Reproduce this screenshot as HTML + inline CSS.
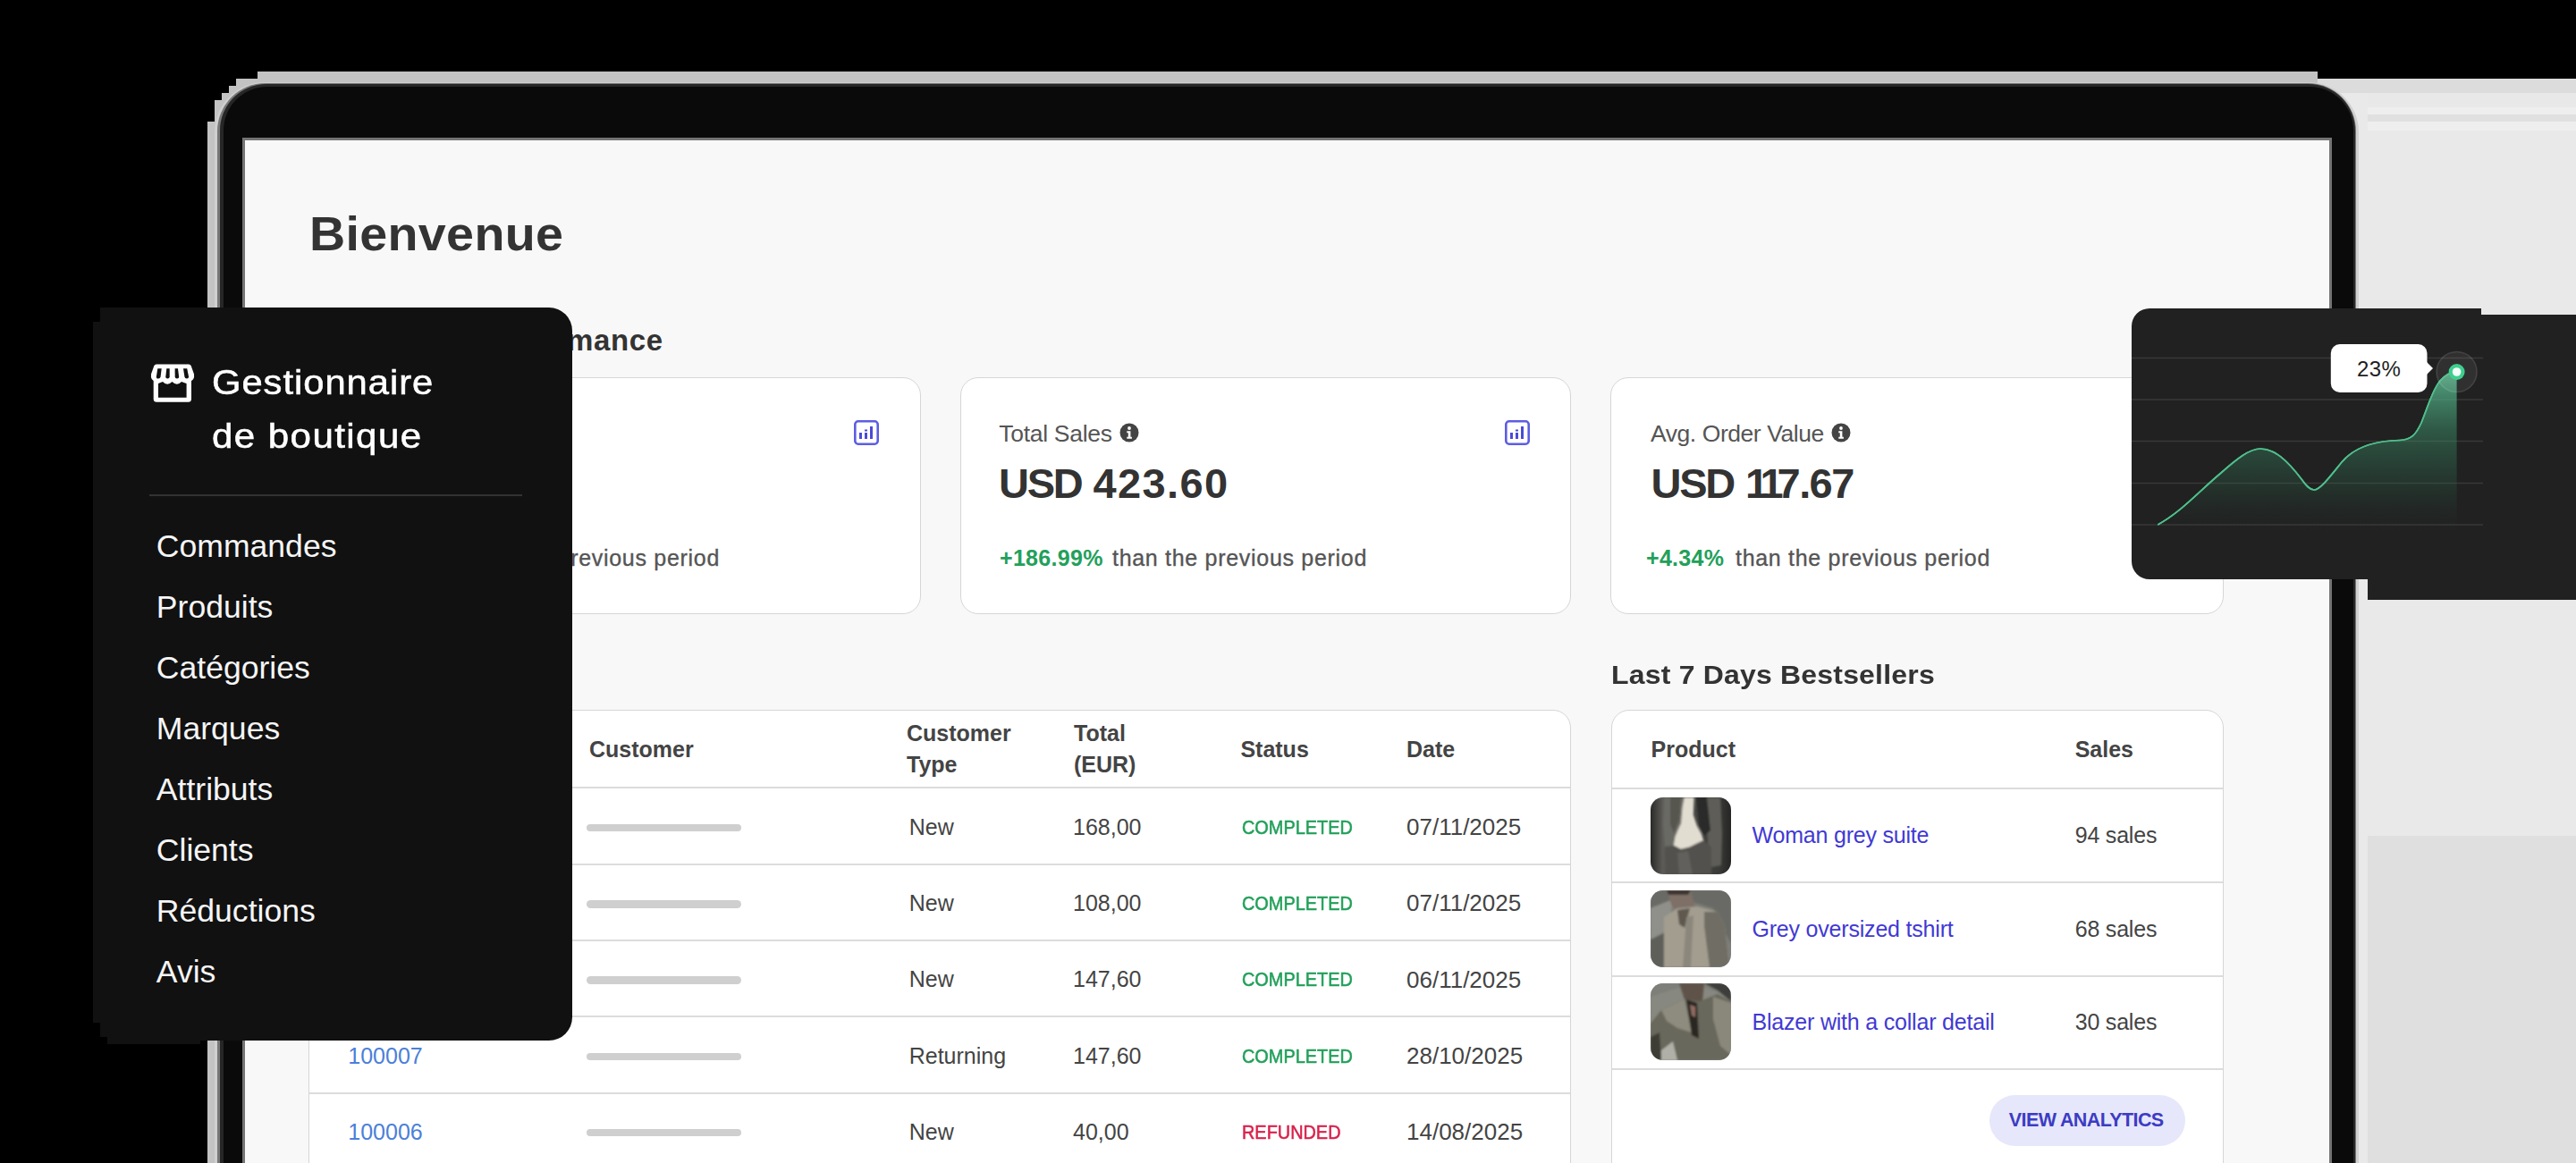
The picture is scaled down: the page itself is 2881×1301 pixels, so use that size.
<!DOCTYPE html>
<html><head><meta charset="utf-8">
<style>
*{margin:0;padding:0;box-sizing:border-box}
html,body{width:2881px;height:1301px;overflow:hidden;background:#000}
body{position:relative;font-family:"Liberation Sans",sans-serif}
.a{position:absolute}
.t{position:absolute;line-height:1;white-space:nowrap}
.b{font-weight:bold}
.card{background:#fff;border:1.5px solid #d6d6d6;border-radius:20px}
.thumb{border-radius:14px;overflow:hidden}
</style></head><body>
<svg width="0" height="0" style="position:absolute"><defs><filter id="bl" x="-10%" y="-10%" width="120%" height="120%"><feGaussianBlur stdDeviation="1.2"/></filter></defs></svg>

<!-- device outer grey frame (stepped) -->
<svg class="a" style="left:0;top:0" width="2881" height="1301">
  <polygon fill="#c3c3c3" points="288,80 2592,80 2592,1301 232,1301 232,136 240,136 240,112 248,112 248,104 256,104 256,96 264,96 264,88 288,88"/>
  <rect x="2592" y="88" width="289" height="1213" fill="#e9e9e9"/>
  <rect x="2592" y="88" width="289" height="16" fill="#dcdcdc"/>
  <rect x="2648" y="104" width="233" height="16" fill="#e8e8e8"/>
  <rect x="2648" y="120" width="233" height="8" fill="#eeeeee"/>
  <rect x="2648" y="128" width="233" height="8" fill="#e0e0e0"/>
  <rect x="2648" y="136" width="233" height="10" fill="#eeeeee"/>
  <rect x="2648" y="935" width="233" height="366" fill="#dfdfdf"/>
  <rect x="240" y="92" width="2398" height="1300" rx="56" fill="#d0d0d0"/>
  <rect x="243" y="93" width="2392" height="1300" rx="54" fill="#777"/>
  <rect x="246" y="94" width="2388" height="1300" rx="52" fill="#262626"/>
  <rect x="250" y="97" width="2382" height="1300" rx="49" fill="#0a0a0a"/>
  <rect x="271" y="154" width="2337" height="1200" fill="#747474"/>
</svg>

<!-- screen -->
<div class="a" id="screen" style="left:274px;top:157px;width:2331px;height:1144px;background:#f8f8f8"></div>

<!-- ===== screen content ===== -->
<div class="t b" style="left:346px;top:234.7px;font-size:53px;color:#333;letter-spacing:0.3px;transform:scaleX(1.05);transform-origin:0 0">Bienvenue</div>
<div class="t b" style="right:2139.4px;top:364.1px;font-size:33px;color:#333;letter-spacing:0.6px;">Store Performance</div>
<div class="a card" style="left:345px;top:422px;width:685px;height:265px"></div>
<div class="a card" style="left:1074px;top:422px;width:683px;height:265px"></div>
<div class="a card" style="left:1801px;top:422px;width:686px;height:265px"></div>
<svg class="a" style="left:955px;top:470px" width="28" height="28" viewBox="0 0 28 28"><rect x="1.3" y="1.3" width="25.4" height="25.4" rx="3.5" fill="none" stroke="#5d5de3" stroke-width="2.6"/><rect x="6" y="14" width="3" height="7" fill="#4a4ad8"/><rect x="12" y="10.5" width="3" height="2" fill="#4a4ad8"/><rect x="12" y="14" width="3" height="7" fill="#4a4ad8"/><rect x="18" y="7" width="3" height="14" fill="#4a4ad8"/></svg>
<svg class="a" style="left:1683px;top:470px" width="28" height="28" viewBox="0 0 28 28"><rect x="1.3" y="1.3" width="25.4" height="25.4" rx="3.5" fill="none" stroke="#5d5de3" stroke-width="2.6"/><rect x="6" y="14" width="3" height="7" fill="#4a4ad8"/><rect x="12" y="10.5" width="3" height="2" fill="#4a4ad8"/><rect x="12" y="14" width="3" height="7" fill="#4a4ad8"/><rect x="18" y="7" width="3" height="14" fill="#4a4ad8"/></svg>
<div class="t" style="left:389px;top:472.4px;font-size:26.5px;color:#555;">Total Orders</div>
<div class="t b" style="left:389px;top:517.2px;font-size:47px;color:#333;">4</div>
<div class="t b" style="left:389px;top:611.8px;font-size:25px;color:#22a05a;">+50.00%</div>
<div class="t" style="right:2076.0px;top:611.8px;font-size:25px;color:#555;letter-spacing:0.7px;-webkit-text-stroke:0.35px #555">than the previous period</div>
<div class="t" style="left:1117.3px;top:472.4px;font-size:26.5px;color:#555;letter-spacing:-0.3px;">Total Sales</div>
<svg class="a" style="left:1252px;top:473px" width="22" height="22" viewBox="0 0 22 22"><circle cx="11" cy="11" r="10.5" fill="#444"/><circle cx="11" cy="6" r="1.9" fill="#fff"/><path d="M8.3 9.2h4.1v6.6h1.5v2H8.3v-2h1.5v-4.6H8.3z" fill="#fff"/></svg>
<div class="t b" style="left:1117px;top:517.2px;font-size:47px;color:#333;"><span style="letter-spacing:-2.3px">USD</span> <span style="letter-spacing:1.4px">423.60</span></div>
<div class="t b" style="left:1118px;top:611.8px;font-size:25px;color:#22a05a;letter-spacing:0.3px;">+186.99%</div>
<div class="t" style="left:1244px;top:611.8px;font-size:25px;color:#555;letter-spacing:0.7px;-webkit-text-stroke:0.35px #555">than the previous period</div>
<div class="t" style="left:1846px;top:472.4px;font-size:26.5px;color:#555;letter-spacing:-0.44px;">Avg. Order Value</div>
<svg class="a" style="left:2048px;top:473px" width="22" height="22" viewBox="0 0 22 22"><circle cx="11" cy="11" r="10.5" fill="#444"/><circle cx="11" cy="6" r="1.9" fill="#fff"/><path d="M8.3 9.2h4.1v6.6h1.5v2H8.3v-2h1.5v-4.6H8.3z" fill="#fff"/></svg>
<div class="t b" style="left:1846.5px;top:517.2px;font-size:47px;color:#333;"><span style="letter-spacing:-2.3px">USD</span> <span style="letter-spacing:-7px">11</span><span style="letter-spacing:-1.6px">7.67</span></div>
<div class="t b" style="left:1841px;top:611.8px;font-size:25px;color:#22a05a;letter-spacing:0.3px;">+4.34%</div>
<div class="t" style="left:1941px;top:611.8px;font-size:25px;color:#555;letter-spacing:0.7px;-webkit-text-stroke:0.35px #555">than the previous period</div>
<div class="a card" style="left:345px;top:794px;width:1412px;height:700px"></div>
<div class="a" style="left:346px;top:880px;width:1410px;height:2px;background:#dcdcdc"></div>
<div class="a" style="left:346px;top:966px;width:1410px;height:2px;background:#dcdcdc"></div>
<div class="a" style="left:346px;top:1051px;width:1410px;height:2px;background:#dcdcdc"></div>
<div class="a" style="left:346px;top:1136px;width:1410px;height:2px;background:#dcdcdc"></div>
<div class="a" style="left:346px;top:1221.5px;width:1410px;height:2px;background:#dcdcdc"></div>
<div class="t b" style="left:389px;top:825.8px;font-size:25px;color:#444;">Order</div>
<div class="t b" style="left:659px;top:825.8px;font-size:25px;color:#444;">Customer</div>
<div class="t b" style="left:1014px;top:807.5px;font-size:25px;color:#444;">Customer</div>
<div class="t b" style="left:1014px;top:843.2px;font-size:25px;color:#444;">Type</div>
<div class="t b" style="left:1201px;top:807.5px;font-size:25px;color:#444;">Total</div>
<div class="t b" style="left:1201px;top:843.2px;font-size:25px;color:#444;">(EUR)</div>
<div class="t b" style="left:1387.4px;top:825.8px;font-size:25px;color:#444;">Status</div>
<div class="t b" style="left:1573px;top:825.8px;font-size:25px;color:#444;">Date</div>
<div class="t" style="left:389.3px;top:912.8px;font-size:25px;color:#4a80d8;">100010</div>
<div class="a" style="left:656px;top:921.8px;width:173px;height:8.5px;border-radius:5px;background:#cfcfcf"></div>
<div class="t" style="left:1016.7px;top:912.8px;font-size:25px;color:#444;">New</div>
<div class="t" style="left:1200px;top:912.8px;font-size:25px;color:#444;">168,00</div>
<div class="t" style="left:1388.5px;top:915.8px;font-size:21.5px;color:#22a05a;-webkit-text-stroke:0.55px #22a05a;transform:scaleX(0.925);transform-origin:0 0">COMPLETED</div>
<div class="t" style="left:1573px;top:912.0px;font-size:26px;color:#444;">07/11/2025</div>
<div class="t" style="left:389.3px;top:998.1px;font-size:25px;color:#4a80d8;">100009</div>
<div class="a" style="left:656px;top:1007.0px;width:173px;height:8.5px;border-radius:5px;background:#cfcfcf"></div>
<div class="t" style="left:1016.7px;top:998.1px;font-size:25px;color:#444;">New</div>
<div class="t" style="left:1200px;top:998.1px;font-size:25px;color:#444;">108,00</div>
<div class="t" style="left:1388.5px;top:1001.1px;font-size:21.5px;color:#22a05a;-webkit-text-stroke:0.55px #22a05a;transform:scaleX(0.925);transform-origin:0 0">COMPLETED</div>
<div class="t" style="left:1573px;top:997.2px;font-size:26px;color:#444;">07/11/2025</div>
<div class="t" style="left:389.3px;top:1083.3px;font-size:25px;color:#4a80d8;">100008</div>
<div class="a" style="left:656px;top:1092.3px;width:173px;height:8.5px;border-radius:5px;background:#cfcfcf"></div>
<div class="t" style="left:1016.7px;top:1083.3px;font-size:25px;color:#444;">New</div>
<div class="t" style="left:1200px;top:1083.3px;font-size:25px;color:#444;">147,60</div>
<div class="t" style="left:1388.5px;top:1086.3px;font-size:21.5px;color:#22a05a;-webkit-text-stroke:0.55px #22a05a;transform:scaleX(0.925);transform-origin:0 0">COMPLETED</div>
<div class="t" style="left:1573px;top:1082.5px;font-size:26px;color:#444;">06/11/2025</div>
<div class="t" style="left:389.3px;top:1168.6px;font-size:25px;color:#4a80d8;">100007</div>
<div class="a" style="left:656px;top:1177.5px;width:173px;height:8.5px;border-radius:5px;background:#cfcfcf"></div>
<div class="t" style="left:1016.7px;top:1168.6px;font-size:25px;color:#444;">Returning</div>
<div class="t" style="left:1200px;top:1168.6px;font-size:25px;color:#444;">147,60</div>
<div class="t" style="left:1388.5px;top:1171.6px;font-size:21.5px;color:#22a05a;-webkit-text-stroke:0.55px #22a05a;transform:scaleX(0.925);transform-origin:0 0">COMPLETED</div>
<div class="t" style="left:1573px;top:1167.7px;font-size:26px;color:#444;">28/10/2025</div>
<div class="t" style="left:389.3px;top:1253.8px;font-size:25px;color:#4a80d8;">100006</div>
<div class="a" style="left:656px;top:1262.8px;width:173px;height:8.5px;border-radius:5px;background:#cfcfcf"></div>
<div class="t" style="left:1016.7px;top:1253.8px;font-size:25px;color:#444;">New</div>
<div class="t" style="left:1200px;top:1253.8px;font-size:25px;color:#444;">40,00</div>
<div class="t" style="left:1388.5px;top:1256.8px;font-size:21.5px;color:#d8234c;-webkit-text-stroke:0.55px #d8234c;transform:scaleX(0.925);transform-origin:0 0">REFUNDED</div>
<div class="t" style="left:1573px;top:1253.0px;font-size:26px;color:#444;">14/08/2025</div>
<div class="t b" style="left:1801.5px;top:740.0px;font-size:30px;color:#333;letter-spacing:0.2px;transform:scaleX(1.065);transform-origin:0 0">Last 7 Days Bestsellers</div>
<div class="a card" style="left:1802px;top:794px;width:685px;height:700px"></div>
<div class="a" style="left:1803px;top:880.5px;width:683px;height:2px;background:#dcdcdc"></div>
<div class="a" style="left:1803px;top:985.5px;width:683px;height:2px;background:#dcdcdc"></div>
<div class="a" style="left:1803px;top:1090.5px;width:683px;height:2px;background:#dcdcdc"></div>
<div class="a" style="left:1803px;top:1194.5px;width:683px;height:2px;background:#dcdcdc"></div>
<div class="t b" style="left:1846.6px;top:825.8px;font-size:25px;color:#444;">Product</div>
<div class="t b" style="left:2320.7px;top:825.8px;font-size:25px;color:#444;">Sales</div>
<svg class="a thumb" style="left:1845.5px;top:891.5px" width="90" height="86" viewBox="0 0 90 86"><defs><linearGradient id="t1bg" x1="0" x2="1"><stop offset="0" stop-color="#2a2a28"/><stop offset="0.15" stop-color="#5c5b57"/><stop offset="0.85" stop-color="#3a3a38"/><stop offset="1" stop-color="#252523"/></linearGradient></defs>
<rect width="90" height="86" fill="url(#t1bg)"/>
<g filter="url(#bl)">
<polygon points="15,0 37,0 35,12 33,30 27,44 25,56 16,60 14,30" fill="#6b6a65"/>
<polygon points="22,0 34,0 32,25 26,40 22,30" fill="#57564f"/>
<polygon points="62,0 78,0 80,40 79,76 68,78 64,50" fill="#5e5d59"/>
<polygon points="51,0 63,0 67,37 60,43 54,32" fill="#2c2c2a"/>
<polygon points="37.6,0 48.6,0 47.8,19.5 51.9,31.8 56.8,40.8 59.2,48.1 51.9,51.4 43.7,55.5 33.9,57.9 25.7,53.8 27.4,44 31.5,34.2 33.9,29.3 35.5,11.3" fill="#e2ddd1"/>
<polygon points="16,55 26,54 34,58 44,56 60,48 68,56 68,86 17,86" fill="#52514d"/>
<polygon points="30,62 42,60 47,86 32,86" fill="#62615c"/>
</g></svg>
<div class="t" style="left:1959.5px;top:922.0px;font-size:25px;color:#4139d4;letter-spacing:-0.2px;">Woman grey suite</div>
<div class="t" style="left:2320.7px;top:922.0px;font-size:25px;color:#444;letter-spacing:-0.2px;">94 sales</div>
<svg class="a thumb" style="left:1845.5px;top:995.5px" width="90" height="86" viewBox="0 0 90 86"><rect width="90" height="86" fill="#7d7e79"/>
<g filter="url(#bl)">
<polygon points="0,0 90,0 90,60 70,20 30,8 0,20" fill="#696a65"/>
<polygon points="0,20 25,10 20,45 0,55" fill="#8f908a"/>
<polygon points="0,55 20,45 18,86 0,86" fill="#5e5f5a"/>
<polygon points="18,0 45,0 50,20 32,24 24,18" fill="#7e7066"/>
<polygon points="18,0 45,0 42,5 20,5" fill="#3c3430"/>
<polygon points="15,30 30,20 52,18 75,24 83,40 88,86 15,86" fill="#a39d90"/>
<polygon points="60,24 75,24 83,40 88,86 66,86 60,40" fill="#6f6d65"/>
<polygon points="30,22 44,20 38,42 32,38" fill="#5e5850"/>
<polygon points="40,30 48,28 45,86 36,86" fill="#8c877b"/>
</g></svg>
<div class="t" style="left:1959.5px;top:1026.8px;font-size:25px;color:#4139d4;letter-spacing:-0.2px;">Grey oversized tshirt</div>
<div class="t" style="left:2320.7px;top:1026.8px;font-size:25px;color:#444;letter-spacing:-0.2px;">68 sales</div>
<svg class="a thumb" style="left:1845.5px;top:1100px" width="90" height="86" viewBox="0 0 90 86"><rect width="90" height="86" fill="#878880"/>
<g filter="url(#bl)">
<polygon points="0,0 90,0 90,15 60,5 30,5 0,15" fill="#7e7f78"/>
<polygon points="32,0 60,0 58,20 45,28 38,18" fill="#5e5249"/>
<polygon points="60,0 90,0 90,20 75,8" fill="#3e3e3a"/>
<polygon points="0,45 12,30 38,18 55,20 75,12 90,20 90,86 0,86" fill="#69685c"/>
<polygon points="12,30 38,18 46,55 30,50 18,42" fill="#8e8c7e"/>
<polygon points="70,15 90,22 90,80 78,70 70,40" fill="#8a887a"/>
<polygon points="40,18 52,22 54,62 46,58" fill="#2c2824"/>
<polygon points="44,24 50,26 50,38 46,36" fill="#8e6a60"/>
<polygon points="12,75 25,65 30,86 12,86" fill="#b0b0a8"/>
<polygon points="0,60 10,55 12,86 0,86" fill="#3c3c36"/>
</g></svg>
<div class="t" style="left:1959.5px;top:1131.2px;font-size:25px;color:#4139d4;letter-spacing:-0.2px;">Blazer with a collar detail</div>
<div class="t" style="left:2320.7px;top:1131.2px;font-size:25px;color:#444;letter-spacing:-0.2px;">30 sales</div>
<div class="a" style="left:2225px;top:1225px;width:219px;height:57px;border-radius:29px;background:#e7e7fb"></div>
<div class="t b" style="left:2246.8px;top:1242.8px;font-size:21.5px;color:#3c3cc4;letter-spacing:-0.6px;">VIEW ANALYTICS</div>
<div class="t b" style="left:346px;top:740.0px;font-size:29.5px;color:#333;letter-spacing:1.4px;">Recent Orders</div>
<!-- ===== sidebar ===== -->
<svg class="a" style="left:0;top:0" width="700" height="1200"><path fill="#111111" d="M112,344 H614 A26,26 0 0 1 640,370 V1138 A26,26 0 0 1 614,1164 H224 V1168 H120 V1160 H112 V1144 H104 V360 H112 Z"/></svg>
<svg class="a" style="left:160px;top:395px" width="70" height="65" viewBox="0 0 70 65"><path fill="#fff" d="M15,12.6 H51 Q53,12.6 53.8,14.5 L57,23.5 Q58,30.5 52,31.5 H14 Q8,30.5 9,23.5 L12.2,14.5 Q13,12.6 15,12.6 Z"/><rect x="11.7" y="25" width="42.3" height="29.8" rx="3.5" fill="#fff"/><path fill="#111" d="M17,34 Q19.5,33 22,32 Q27,37.5 32.5,32 Q38,37.5 43,32 Q45.5,33 48.6,34 V49.7 H17 Z"/><g fill="#111"><path d="M16.3,17.3 H20.7 L19.6,26.3 Q19.2,28.6 17,28.6 Q14.6,28.6 14.9,26.3 Z"/><path d="M26.3,17.3 H29.7 L29.7,26.3 Q29.6,28.6 27.4,28.6 Q25.1,28.6 25.3,26.3 Z"/><path d="M35.6,17.3 H39 L40.1,26.3 Q40.3,28.6 38,28.6 Q35.8,28.6 35.7,26.3 Z"/><path d="M45,17.3 H49.2 L51,26.3 Q51.2,28.6 49,28.6 Q46.8,28.6 46.4,26.3 Z"/></g></svg>
<div class="t" style="left:237px;top:408.0px;font-size:39px;color:#fff;letter-spacing:0.9px;-webkit-text-stroke:0.55px #fff;transform:scaleX(1.07);transform-origin:0 0">Gestionnaire</div>
<div class="t" style="left:237px;top:467.7px;font-size:39px;color:#fff;letter-spacing:1.3px;-webkit-text-stroke:0.55px #fff;transform:scaleX(1.08);transform-origin:0 0">de boutique</div>
<div class="a" style="left:167px;top:553px;width:417px;height:1.5px;background:#333"></div>
<div class="t" style="left:174.8px;top:593.7px;font-size:35.6px;color:#f5f5f5;">Commandes</div>
<div class="t" style="left:174.8px;top:661.8px;font-size:35.6px;color:#f5f5f5;">Produits</div>
<div class="t" style="left:174.8px;top:729.9px;font-size:35.6px;color:#f5f5f5;">Catégories</div>
<div class="t" style="left:174.8px;top:798.0px;font-size:35.6px;color:#f5f5f5;">Marques</div>
<div class="t" style="left:174.8px;top:866.1px;font-size:35.6px;color:#f5f5f5;">Attributs</div>
<div class="t" style="left:174.8px;top:934.2px;font-size:35.6px;color:#f5f5f5;">Clients</div>
<div class="t" style="left:174.8px;top:1002.3px;font-size:35.6px;color:#f5f5f5;">Réductions</div>
<div class="t" style="left:174.8px;top:1070.4px;font-size:35.6px;color:#f5f5f5;">Avis</div>
<!-- ===== chart panel ===== -->
<svg class="a" style="left:2384px;top:345px" width="497" height="326" viewBox="0 0 497 326">
<defs><linearGradient id="gf" x1="0" y1="0" x2="0" y2="1"><stop offset="0" stop-color="#5fc096" stop-opacity="0.85"/><stop offset="0.3" stop-color="#3f9a72" stop-opacity="0.45"/><stop offset="0.6" stop-color="#2f7d5a" stop-opacity="0.18"/><stop offset="0.85" stop-color="#222" stop-opacity="0"/></linearGradient></defs>
<path fill="#212121" d="M20,0 H391 V7 H497 V326 H264 V303 H20 A20,20 0 0 1 0,283 V20 A20,20 0 0 1 20,0 Z"/>
<g stroke="#383838" stroke-width="1.5"><line x1="0" y1="55.6" x2="393" y2="55.6"/><line x1="0" y1="102" x2="393" y2="102"/><line x1="0" y1="148.4" x2="393" y2="148.4"/><line x1="0" y1="195.5" x2="393" y2="195.5"/><line x1="0" y1="242" x2="393" y2="242"/></g>
<path id="cv" d="M29.3,241.9 C55,228 75,205 100,184 C118,168 132,157 144,157 C160,157 174,170 190,191 C195,198 199,203 204,203 C211,203 222,188 235,172 C250,154 275,148 300,147.5 C313,147 318,141 324,128 C332,108 337,90 345,81 C351,74 357,71 363.6,71" fill="none" stroke="#4fbf8c" stroke-width="1.7"/>
<path d="M29.3,241.9 C55,228 75,205 100,184 C118,168 132,157 144,157 C160,157 174,170 190,191 C195,198 199,203 204,203 C211,203 222,188 235,172 C250,154 275,148 300,147.5 C313,147 318,141 324,128 C332,108 337,90 345,81 C351,74 357,71 363.6,71 V290 H29.3 Z" fill="url(#gf)"/>
<use href="#cv"/>
<circle cx="363.6" cy="71" r="22.5" fill="rgba(255,255,255,0.07)" stroke="rgba(255,255,255,0.13)" stroke-width="1.5"/>
<circle cx="363.6" cy="71" r="9" fill="#3ecf8e"/>
<circle cx="363.6" cy="71" r="4.8" fill="#f4fff9"/>
<rect x="222.8" y="40" width="107.7" height="54" rx="10" fill="#fff"/>
<path d="M330,60 L337,67 L330,74 Z" fill="#fff"/>
</svg>
<div class="t" style="left:2606.8px;width:107.7px;text-align:center;top:401.0px;font-size:24px;color:#1e1e1e;letter-spacing:0.4px">23%</div>
</body></html>
